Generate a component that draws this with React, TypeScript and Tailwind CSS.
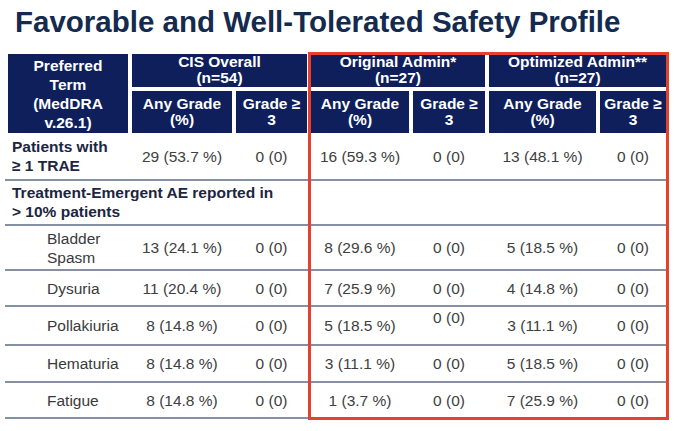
import React from 'react';

const cols = 'grid grid-cols-[120px_100px_71px_98px_72px_107px_66px] gap-x-[4px]';
const head = 'flex items-center justify-center bg-[#0e1f5b] text-center font-bold text-white';

type Row = {
  label: React.ReactNode;
  indent?: boolean;
  values: string[];
  h: string;
  raised?: number;
};

const rows: Row[] = [
  { label: <>Patients with<br />≥ 1 TRAE</>, values: ['29 (53.7 %)', '0 (0)', '16 (59.3 %)', '0 (0)', '13 (48.1 %)', '0 (0)'], h: 'h-[48px]' },
  { label: 'Bladder Spasm', indent: true, values: ['13 (24.1 %)', '0 (0)', '8 (29.6 %)', '0 (0)', '5 (18.5 %)', '0 (0)'], h: 'h-[45px]' },
  { label: 'Dysuria', indent: true, values: ['11 (20.4 %)', '0 (0)', '7 (25.9 %)', '0 (0)', '4 (14.8 %)', '0 (0)'], h: 'h-[36px]' },
  { label: 'Pollakiuria', indent: true, values: ['8 (14.8 %)', '0 (0)', '5 (18.5 %)', '0 (0)', '3 (11.1 %)', '0 (0)'], h: 'h-[39px]', raised: 3 },
  { label: 'Hematuria', indent: true, values: ['8 (14.8 %)', '0 (0)', '3 (11.1 %)', '0 (0)', '5 (18.5 %)', '0 (0)'], h: 'h-[37px]' },
  { label: 'Fatigue', indent: true, values: ['8 (14.8 %)', '0 (0)', '1 (3.7 %)', '0 (0)', '7 (25.9 %)', '0 (0)'], h: 'h-[36px]' },
];

function BodyRow({ row }: { row: Row }) {
  return (
    <div className={`${row.h} border-b-2 border-[#8590a3] pl-[3px]`}>
      <div className={`${cols} h-full`}>
        <div
          className={
            row.indent
              ? 'flex items-center pl-[39px] leading-[19px] text-[#3a3a3a]'
              : 'flex items-center pl-[4px] font-bold leading-[19px] text-[#1c2541]'
          }
        >
          <span className={row.indent ? 'w-[70px]' : ''}>{row.label}</span>
        </div>
        {row.values.map((v, i) => (
          <div
            key={i}
            className={
              row.raised === i
                ? 'flex items-start justify-center pt-[1px] leading-[19px] text-[#404040]'
                : 'flex items-center justify-center leading-[19px] text-[#404040]'
            }
          >
            {v}
          </div>
        ))}
      </div>
    </div>
  );
}

export default function App() {
  return (
    <div className="relative h-[431px] w-[680px] overflow-hidden bg-white font-['Liberation_Sans',Arial,sans-serif]">
      <h1 className="pl-[15px] pt-[6px] text-[29.5px] font-bold leading-[32px] text-[#142a4e]">
        Favorable and Well-Tolerated Safety Profile
      </h1>

      <div className="ml-[5px] mt-[16px] w-[662px] text-[15.5px]">
        <div className={`${cols} grid-rows-[33px_42px] gap-y-[4px] pl-[3px]`}>
          <div className={`${head} row-span-2 leading-[19px]`}>
            Preferred<br />Term<br />(MedDRA<br />v.26.1)
          </div>
          <div className={`${head} col-span-2 pb-[2px] leading-[16px]`}>
            CIS Overall<br />(n=54)
          </div>
          <div className={`${head} col-span-2 pb-[2px] leading-[16px]`}>
            Original Admin*<br />(n=27)
          </div>
          <div className={`${head} col-span-2 pb-[2px] leading-[16px]`}>
            Optimized Admin**<br />(n=27)
          </div>
          <div className={`${head} leading-[16px]`}>Any Grade<br />(%)</div>
          <div className={`${head} leading-[16px]`}>Grade ≥<br />3</div>
          <div className={`${head} leading-[16px]`}>Any Grade<br />(%)</div>
          <div className={`${head} leading-[16px]`}>Grade ≥<br />3</div>
          <div className={`${head} leading-[16px]`}>Any Grade<br />(%)</div>
          <div className={`${head} leading-[16px]`}>Grade ≥<br />3</div>
        </div>

        <BodyRow row={rows[0]} />
        <div className="flex h-[45px] items-center border-b-2 border-[#8590a3] pl-[7px] pb-[2px] font-bold leading-[19px] text-[#1c2541]">
          <span>
            Treatment-Emergent AE reported in<br />&gt; 10% patients
          </span>
        </div>
        {rows.slice(1).map((r, i) => (
          <BodyRow key={i} row={r} />
        ))}
      </div>

      <div className="pointer-events-none absolute left-[308px] top-[52px] h-[368px] w-[361px] border-[3px] border-[#e4412f]" />
    </div>
  );
}
